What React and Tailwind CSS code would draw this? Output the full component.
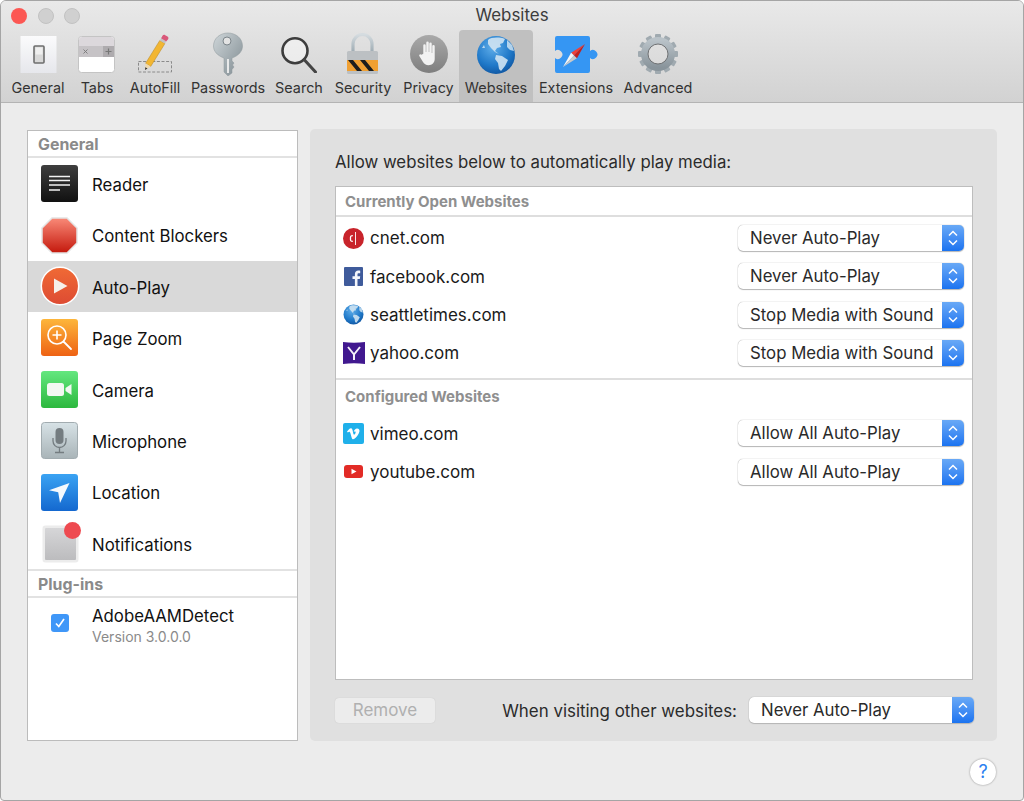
import React from 'react';

const toolbar = [
  { label: 'General', w: 'w-[64px]', icon: <GeneralIcon /> },
  { label: 'Tabs', w: 'w-[54px]', icon: <TabsIcon /> },
  { label: 'AutoFill', w: 'w-[62px]', icon: <PencilIcon /> },
  { label: 'Passwords', w: 'w-[84px]', icon: <KeyIcon /> },
  { label: 'Search', w: 'w-[58px]', icon: <SearchIcon /> },
  { label: 'Security', w: 'w-[70px]', icon: <LockIcon /> },
  { label: 'Privacy', w: 'w-[61px]', icon: <HandIcon /> },
  { label: 'Websites', w: 'w-[74px]', icon: <span className="mt-[2px] block"><GlobeIcon id="big" size={40} /></span>, active: true },
  { label: 'Extensions', w: 'w-[86px]', icon: <ExtensionIcon /> },
  { label: 'Advanced', w: 'w-[78px]', icon: <GearIcon /> },
];

const sidebar = [
  { label: 'Reader', icon: <ReaderIcon /> },
  { label: 'Content Blockers', icon: <StopIcon /> },
  { label: 'Auto-Play', icon: <PlayIcon />, active: true },
  { label: 'Page Zoom', icon: <ZoomIcon /> },
  { label: 'Camera', icon: <CameraIcon /> },
  { label: 'Microphone', icon: <MicIcon /> },
  { label: 'Location', icon: <LocationIcon /> },
  { label: 'Notifications', icon: <NotifIcon /> },
];

const openSites = [
  { name: 'cnet.com', value: 'Never Auto-Play', icon: <CnetIcon /> },
  { name: 'facebook.com', value: 'Never Auto-Play', icon: <FacebookIcon /> },
  { name: 'seattletimes.com', value: 'Stop Media with Sound', icon: <GlobeIcon id="small" size={21} /> },
  { name: 'yahoo.com', value: 'Stop Media with Sound', icon: <YahooIcon /> },
];

const configuredSites = [
  { name: 'vimeo.com', value: 'Allow All Auto-Play', icon: <VimeoIcon /> },
  { name: 'youtube.com', value: 'Allow All Auto-Play', icon: <YoutubeIcon /> },
];

function GeneralIcon() {
  return (
    <svg width="40" height="40" viewBox="0 0 40 40">
      <defs>
        <linearGradient id="genBg" x1="0" y1="0" x2="0" y2="1">
          <stop offset="0" stopColor="#fbfbfc" />
          <stop offset="1" stopColor="#e6e7ec" />
        </linearGradient>
      </defs>
      <rect x="2.500" y="3" width="36" height="37" fill="url(#genBg)" />
      <rect x="16" y="13" width="10" height="17" rx="1" fill="#d8d8d8" stroke="#6e6e6e" strokeWidth="1.600" />
      <rect x="17.500" y="14.500" width="7" height="7" fill="#efefef" />
    </svg>
  );
}

function TabsIcon() {
  return (
    <svg width="40" height="40" viewBox="0 0 40 40">
      <rect x="1.500" y="3.500" width="36" height="36" rx="3" fill="#fff" stroke="#c4c4c4" />
      <path d="M2 7a3 3 0 0 1 3-3h29a3 3 0 0 1 3 3v6H2z" fill="#dcd8dc" />
      <rect x="2" y="13" width="35" height="11" fill="#c6c3c6" />
      <rect x="26" y="13" width="11" height="11" fill="#aeabae" />
      <path d="M6.500 16.500l4 4M10.500 16.500l-4 4" stroke="#777" strokeWidth="0.900" />
      <path d="M31.500 15.500v6M28.500 18.500h6" stroke="#777" strokeWidth="1.200" />
    </svg>
  );
}

function PencilIcon() {
  return (
    <svg width="40" height="40" viewBox="0 0 40 40">
      <rect x="3.500" y="28.500" width="33" height="10.500" fill="none" stroke="#8a8a8a" strokeDasharray="3 1.600" />
      <path d="M10.600 30.300L24.800 7.400l5.100 3.200L15.700 33.500z" fill="#f2b632" stroke="#b5841f" strokeWidth="0.500" />
      <path d="M10 37l.6-6.700 5.100 3.200z" fill="#efd9ae" />
      <path d="M10 37l.3-2.800 2.200 1.300z" fill="#333" />
      <path d="M24.800 7.400l1.300-2.200 5.100 3.200-1.300 2.200z" fill="#c2c2c2" />
      <path d="M26.100 5.200l1.400-2.400c.6-1 1.700-1.200 2.700-.6l2.300 1.400c1 .6 1.200 1.700.6 2.700l-1.900 2.100z" fill="#d9587a" />
    </svg>
  );
}

function KeyIcon() {
  return (
    <svg width="40" height="46" viewBox="0 0 40 46" className="-mt-[3px]">
      <defs>
        <linearGradient id="keyBg" x1="0" y1="0" x2="1" y2="1">
          <stop offset="0" stopColor="#cfd6d9" />
          <stop offset="1" stopColor="#7e8a90" />
        </linearGradient>
      </defs>
      <path d="M20 3c7.500 0 14.500 5 14.500 13 0 5-3.500 9.500-10.500 12v3l2 2-1.500 2 1.500 2-2 2.500V43l-4 3-4-4V28C9 25.500 5.500 21 5.500 16 5.500 8 12.500 3 20 3z" fill="url(#keyBg)" stroke="#8f989c" strokeWidth="0.500" />
      <circle cx="19" cy="11" r="4" fill="#e3e3e3" stroke="#7d868b" strokeWidth="1" />
      <path d="M20 29v14" stroke="#f1f1f1" strokeWidth="1.800" />
    </svg>
  );
}

function SearchIcon() {
  return (
    <svg width="40" height="40" viewBox="0 0 40 40">
      <circle cx="16" cy="17.700" r="12.500" fill="#fafafa" fillOpacity="0.550" stroke="#3d3d3d" strokeWidth="2.600" />
      <path d="M25.500 27l11 12" stroke="#444" strokeWidth="3" strokeLinecap="round" />
    </svg>
  );
}

function LockIcon() {
  return (
    <svg width="40" height="44" viewBox="0 0 40 44" className="-mt-[3px]">
      <defs>
        <linearGradient id="lockArc" x1="0" y1="0" x2="0" y2="1">
          <stop offset="0" stopColor="#d5dce0" />
          <stop offset="1" stopColor="#9aa8b0" />
        </linearGradient>
        <clipPath id="lockBand">
          <rect x="4" y="30" width="31" height="11" />
        </clipPath>
      </defs>
      <path d="M10 23v-9a9.500 9.500 0 0 1 19 0v9" fill="none" stroke="url(#lockArc)" strokeWidth="3.200" />
      <rect x="4" y="21" width="31" height="23" rx="1.500" fill="#bcc0c3" />
      <g clipPath="url(#lockBand)">
        <rect x="4" y="30" width="31" height="11" fill="#f0a033" />
        <path d="M5 30h5l9 11h-5zM17 30h5l9 11h-5z" fill="#1d1d1d" />
      </g>
    </svg>
  );
}

function HandIcon() {
  return (
    <svg width="40" height="40" viewBox="0 0 40 40">
      <defs>
        <linearGradient id="handBg" x1="0" y1="0" x2="0" y2="1">
          <stop offset="0" stopColor="#a9a9a9" />
          <stop offset="1" stopColor="#7e7e7e" />
        </linearGradient>
      </defs>
      <circle cx="20" cy="21" r="19" fill="url(#handBg)" />
      <path transform="translate(2.400 2.300) scale(0.880)" d="M13.500 21V11.500a1.400 1.400 0 0 1 2.800 0V19h.6V8.500a1.400 1.400 0 0 1 2.800 0V19h.6V9.500a1.400 1.400 0 0 1 2.800 0V20h.6v-7.500a1.400 1.400 0 0 1 2.800 0V27c0 4-3 7-7 7-3 0-5-1.500-6.500-4L9 23.500c-.9-1.500 1.400-2.800 2.500-1.300z" fill="#f2f2f2" />
    </svg>
  );
}

function GlobeIcon({ id, size }) {
  return (
    <svg width={size} height={size} viewBox="0 0 40 40" className="shrink-0">
      <defs>
        <radialGradient id={`globe-${id}`} cx="0.42" cy="0.3" r="0.8">
          <stop offset="0" stopColor="#5faeea" />
          <stop offset="0.6" stopColor="#1f78c8" />
          <stop offset="1" stopColor="#0c4d97" />
        </radialGradient>
      </defs>
      <circle cx="20" cy="20" r="19" fill={`url(#globe-${id})`} />
      <path d="M12 5C15 2 24 2 29 4l-2 4-3 1 1 3-4 1-2 3 4 3-4-2-4-4-3-4z" fill="#cfe3f2" fillOpacity="0.9" />
      <path d="M20 20l6 1 6 4-3 6-4 5-2-2-1-6-3-4z" fill="#cfe3f2" fillOpacity="0.9" />
      <path d="M31 5l5 5 2 6-4-1-3-3zM6 13l2-3 1 3z" fill="#d7e8f4" fillOpacity="0.800" />
    </svg>
  );
}

function ExtensionIcon() {
  return (
    <svg width="44" height="40" viewBox="0 0 44 40">
      <path d="M3 3H34A2 2 0 0 1 36 5V18A4.500 4.500 0 1 1 36 25V38A2 2 0 0 1 34 40H3A2 2 0 0 1 1 38V25A4.500 4.500 0 1 0 1 18V5A2 2 0 0 1 3 3Z" fill="#3596f3" />
      <path d="M31 11L17.100 19.700 20 22.500z" fill="#ef4038" />
      <path d="M31 11L22.900 25.300 20 22.500z" fill="#c4201c" />
      <path d="M9 34L17.100 19.700 20 22.500z" fill="#f6f6f6" />
      <path d="M9 34L22.900 25.300 20 22.500z" fill="#c9c9c9" />
    </svg>
  );
}

function GearIcon() {
  const teeth = Array.from({ length: 12 }, (_, i) => i * 30);
  return (
    <svg width="42" height="42" viewBox="0 0 42 42">
      <defs>
        <linearGradient id="gearBg" x1="0" y1="0" x2="0" y2="1">
          <stop offset="0" stopColor="#b9c2c8" />
          <stop offset="1" stopColor="#89949b" />
        </linearGradient>
      </defs>
      <g fill="#a0aab0">
        {teeth.map((a) => (
          <rect key={a} x="18" y="1" width="6" height="7" rx="1" transform={`rotate(${a} 21 21)`} />
        ))}
      </g>
      <circle cx="21" cy="21" r="13.500" fill="none" stroke="url(#gearBg)" strokeWidth="7" />
      <circle cx="21" cy="21" r="10" fill="none" stroke="#707274" strokeWidth="1" />
    </svg>
  );
}

function ReaderIcon() {
  return (
    <svg width="37" height="37" viewBox="0 0 37 37">
      <defs>
        <linearGradient id="rdBg" x1="0" y1="0" x2="0" y2="1">
          <stop offset="0" stopColor="#3e3e3e" />
          <stop offset="1" stopColor="#111" />
        </linearGradient>
      </defs>
      <rect width="37" height="37" rx="3" fill="url(#rdBg)" />
      <path d="M8 11.500h21M8 15.500h21M8 20h21M8 25h11" stroke="#f2f2f2" strokeWidth="1.700" />
    </svg>
  );
}

function StopIcon() {
  return (
    <svg width="37" height="37" viewBox="0 0 37 37">
      <defs>
        <linearGradient id="stBg" x1="0" y1="0" x2="0" y2="1">
          <stop offset="0" stopColor="#f98a78" />
          <stop offset="1" stopColor="#c4180c" />
        </linearGradient>
      </defs>
      <path d="M11 1h15l10 10v15L26 36H11L1 26V11z" fill="url(#stBg)" stroke="#e4e4e4" strokeWidth="1.500" />
    </svg>
  );
}

function PlayIcon() {
  return (
    <svg width="40" height="40" viewBox="0 0 40 40" className="-m-[1.500px] shrink-0">
      <defs>
        <linearGradient id="plBg" x1="0" y1="0" x2="0" y2="1">
          <stop offset="0" stopColor="#f06a35" />
          <stop offset="1" stopColor="#dd4b33" />
        </linearGradient>
      </defs>
      <circle cx="20" cy="20" r="18.700" fill="url(#plBg)" stroke="#fff" strokeWidth="1.500" />
      <path d="M14 12.500L27.500 20 14 27.500z" fill="#f6f0ea" />
    </svg>
  );
}

function ZoomIcon() {
  return (
    <svg width="37" height="37" viewBox="0 0 37 37">
      <defs>
        <linearGradient id="zmBg" x1="0" y1="0" x2="0" y2="1">
          <stop offset="0" stopColor="#fdb63b" />
          <stop offset="1" stopColor="#ee6214" />
        </linearGradient>
      </defs>
      <rect width="37" height="37" rx="3" fill="url(#zmBg)" />
      <circle cx="16" cy="16" r="9" fill="none" stroke="#fff" strokeWidth="1.600" />
      <path d="M16 11.500v9M11.500 16h9" stroke="#fff" strokeWidth="1.600" />
      <path d="M22.500 22.500l7.500 7.500" stroke="#fff" strokeWidth="1.800" strokeLinecap="round" />
    </svg>
  );
}

function CameraIcon() {
  return (
    <svg width="37" height="37" viewBox="0 0 37 37">
      <defs>
        <linearGradient id="cmBg" x1="0" y1="0" x2="0" y2="1">
          <stop offset="0" stopColor="#64e77f" />
          <stop offset="1" stopColor="#2cb83e" />
        </linearGradient>
      </defs>
      <rect width="37" height="37" rx="3" fill="url(#cmBg)" />
      <rect x="6" y="12" width="17" height="13" rx="2.500" fill="#f2f8f2" />
      <path d="M24.500 17l6-4v11l-6-4z" fill="#f2f8f2" />
    </svg>
  );
}

function MicIcon() {
  return (
    <svg width="37" height="37" viewBox="0 0 37 37">
      <defs>
        <linearGradient id="mcBg" x1="0" y1="0" x2="0" y2="1">
          <stop offset="0" stopColor="#d7e2e6" />
          <stop offset="1" stopColor="#a9b4b8" />
        </linearGradient>
      </defs>
      <rect x="0.500" y="0.500" width="36" height="36" rx="3" fill="url(#mcBg)" stroke="#a2acb0" />
      <rect x="14.500" y="6" width="8" height="16" rx="4" fill="#747c80" />
      <path d="M12 16v3a6.500 6.500 0 0 0 13 0v-3M18.500 26v4M14 30.500h9" fill="none" stroke="#747c80" strokeWidth="1.300" />
    </svg>
  );
}

function LocationIcon() {
  return (
    <svg width="37" height="37" viewBox="0 0 37 37">
      <defs>
        <linearGradient id="lcBg" x1="0" y1="0" x2="0" y2="1">
          <stop offset="0" stopColor="#3aa3f3" />
          <stop offset="1" stopColor="#1468cf" />
        </linearGradient>
      </defs>
      <rect width="37" height="37" rx="3" fill="url(#lcBg)" />
      <path d="M28.500 9L19 29l-1.800-10.800L8 16.200z" fill="#f5f9fd" />
    </svg>
  );
}

function NotifIcon() {
  return (
    <span className="relative block h-[37px] w-[37px]">
      <span className="ml-[2px] mt-[1px] block h-[36px] w-[35px] rounded-[3px] border-2 border-[#ececec] bg-linear-to-b from-[#d6d6d8] to-[#bcbcbe] shadow-[0_0_1px_#999]" />
      <span className="absolute -top-[3px] -right-[3px] h-[17px] w-[17px] rounded-full bg-[#ee4a50]" />
    </span>
  );
}

function CnetIcon() {
  return (
    <svg width="21" height="21" viewBox="0 0 21 21" className="shrink-0">
      <circle cx="10.500" cy="10.500" r="10.500" fill="#c8242b" />
      <path d="M9.800 7.800c-1.300-.3-2.300.3-2.300 1.500v2.400c0 1.200 1 1.800 2.300 1.500" fill="none" stroke="#fff" strokeWidth="1.300" />
      <path d="M12.500 4v13" stroke="#fff" strokeWidth="0.900" />
    </svg>
  );
}

function FacebookIcon() {
  return (
    <svg width="21" height="21" viewBox="0 0 21 21" className="shrink-0">
      <rect x="1" y="1" width="19" height="19" rx="1" fill="#3f5b9b" />
      <path d="M14.500 20v-7h2.300l.4-2.800h-2.700V8.500c0-.8.300-1.300 1.400-1.300h1.300V4.700c-.3 0-1-.1-1.900-.1-2 0-3.400 1.200-3.400 3.500v2.100H9.500V13h2.400v7z" fill="#f4f6fb" />
    </svg>
  );
}

function YahooIcon() {
  return (
    <svg width="22" height="22" viewBox="0 0 22 22" className="shrink-0">
      <path d="M0 0c7 1 15 1 22 0v22c-7-1-15-1-22 0z" fill="#41188f" />
      <path d="M5 5l6 7.500V18M17 5l-6 7.500" fill="none" stroke="#f4f0fa" strokeWidth="2" />
    </svg>
  );
}

function VimeoIcon() {
  return (
    <svg width="21" height="21" viewBox="0 0 21 21" className="shrink-0">
      <rect width="21" height="21" rx="2" fill="#1fb0ea" />
      <path d="M4 8.500l.8 1c1.600-1.200 2-1 2.600.8l1.300 4.400c.6 1.700 1.500 2 2.700 1.100 2-1.500 4.300-4.300 5-7 .5-2-.6-3.400-2.400-3.300-1.400.1-2.800 1.400-3.300 3.400 1.700-.8 2.500-.2 1.600 1.500-.9 1.500-1.500 1.700-2 0L9.500 7c-.5-1.800-1.600-2.200-3-1.200z" fill="#fff" />
    </svg>
  );
}

function YoutubeIcon() {
  return (
    <svg width="21" height="21" viewBox="0 0 21 21" className="shrink-0">
      <rect x="1" y="4" width="19" height="13" rx="3" fill="#e22b26" />
      <path d="M8.500 7.800l5 2.700-5 2.700z" fill="#fff" />
    </svg>
  );
}

function PopUp({ value, className = '' }) {
  return (
    <div className={`flex h-[26px] items-stretch overflow-hidden rounded-[5px] bg-white shadow-[0_0_1px_#888,0_1px_1px_#bbb] ${className}`}>
      <span className="flex-1 truncate pl-[12px] text-[16.800px] leading-[26px] text-[#2a2a2a]">{value}</span>
      <span className="flex w-[22px] items-center justify-center bg-linear-to-b from-[#69a9f6] to-[#1a73f0]">
        <svg width="12" height="20" viewBox="0 0 12 20" fill="none" stroke="#fff" strokeWidth="1.500">
          <path d="M2 7.500L6 3.500l4 4M2 12.500l4 4 4-4" />
        </svg>
      </span>
    </div>
  );
}

function SiteRow({ site }) {
  return (
    <div className="flex h-[38.300px] items-center pl-[7px] pr-[8px]">
      <span className="flex w-[21px] justify-center">{site.icon}</span>
      <span className="ml-[6px] flex-1 pt-[2px] text-[17px] text-[#1a1a1a]">{site.name}</span>
      <PopUp value={site.value} className="w-[226px]" />
    </div>
  );
}

export default function App() {
  return (
    <div className="flex h-[801px] w-[1024px] flex-col overflow-hidden rounded-t-[6px] rounded-b-[4px] border border-[#a5a5a5] bg-[#ececec] font-['Inter','Liberation_Sans',sans-serif] text-[#222]">
      {/* title + toolbar */}
      <div className="h-[102px] shrink-0 border-b border-[#b4b4b4] bg-linear-to-b from-[#e9e9e9] to-[#d2d2d2]">
        <div className="grid h-[29px] grid-cols-[1fr_auto_1fr] items-center">
          <div className="flex gap-[10.500px] pl-[10px]">
            <span className="h-[16px] w-[16px] rounded-full bg-[#fc5753]" />
            <span className="h-[16px] w-[16px] rounded-full border border-[#c2c2c2] bg-[#d0d0d0]" />
            <span className="h-[16px] w-[16px] rounded-full border border-[#c2c2c2] bg-[#d0d0d0]" />
          </div>
          <span className="text-[16.900px] text-[#3c3c3c]">Websites</span>
          <span />
        </div>
        <div className="flex pl-[5px]">
          {toolbar.map((item) => (
            <div key={item.label} className={`flex h-[72px] flex-col items-center rounded-t-[4px] pt-[3px] ${item.w} ${item.active ? 'bg-[#c0c0c0]' : ''}`}>
              <div className="flex h-[40px] items-start justify-center">{item.icon}</div>
              <span className="mt-[5px] whitespace-nowrap text-[14.400px] leading-[20px] text-[#333]">{item.label}</span>
            </div>
          ))}
        </div>
      </div>

      {/* body */}
      <div className="flex flex-1 gap-[12px] pl-[26px] pr-[26px] pt-[27px]">
        <aside className="flex h-[611px] w-[271px] shrink-0 flex-col border border-[#bcbcbc] bg-white">
          <div className="h-[27px] border-b-2 border-[#e2e2e2] pl-[10px] text-[15.900px] font-bold leading-[28px] text-[#8a8a8a]">General</div>
          {sidebar.map((item) => (
            <div key={item.label} className={`flex h-[51.400px] items-center gap-[14px] pl-[13px] ${item.active ? 'bg-[#d9d9d9]' : ''}`}>
              <span className="flex h-[37px] w-[37px] items-center justify-center">{item.icon}</span>
              <span className="pt-[4px] text-[16.800px] text-[#111]">{item.label}</span>
            </div>
          ))}
          <div className="h-[29px] border-y-2 border-[#e2e2e2] pl-[10px] text-[15.900px] font-bold leading-[28px] text-[#8a8a8a]">Plug-ins</div>
          <div className="flex items-start pl-[23px] pt-[7px]">
            <span className="mt-[9px] flex h-[18px] w-[18px] items-center justify-center rounded-[3px] bg-[#3f97f8]">
              <svg width="12" height="12" viewBox="0 0 12 12" fill="none" stroke="#fff" strokeWidth="1.700">
                <path d="M2 6.500l2.800 3L10 2" />
              </svg>
            </span>
            <div className="ml-[23px]">
              <div className="text-[16.800px] leading-[22px] text-[#111]">AdobeAAMDetect</div>
              <div className="text-[14px] leading-[20px] text-[#8a8a8a]">Version 3.0.0.0</div>
            </div>
          </div>
        </aside>

        <main className="-mt-px flex h-[612px] w-[687px] flex-col rounded-[5px] bg-[#e0e0e0] pl-[25px] pr-[23px] pt-[22px]">
          <p className="h-[22px] text-[16.800px] leading-[22px] text-[#2b2b2b]">Allow websites below to automatically play media:</p>
          <div className="mt-[13px] h-[494px] w-[638px] border border-[#bdbdbd] bg-white">
            <div className="h-[30px] border-b-2 border-[#dedede] pl-[9px] text-[15px] font-bold leading-[29px] text-[#8f8f8f]">Currently Open Websites</div>
            <div className="pt-[2px]">
              {openSites.map((s) => <SiteRow key={s.name} site={s} />)}
            </div>
            <div className="mt-[6px] h-[36px] border-t-2 border-[#dedede] pl-[9px] text-[15px] font-bold leading-[34px] text-[#8f8f8f]">Configured Websites</div>
            {configuredSites.map((s) => <SiteRow key={s.name} site={s} />)}
          </div>
          <div className="mt-[16px] flex items-center">
            <button className="h-[25px] w-[100px] rounded-[4px] bg-[#ececec] text-[17px] leading-[25px] text-[#b0b0b0] shadow-[0_0_1px_#bbb]">Remove</button>
            <span className="ml-auto pt-[3px] text-[16.900px] text-[#2b2b2b]">When visiting other websites:</span>
            <PopUp value="Never Auto-Play" className="ml-[12px] w-[225px]" />
          </div>
        </main>
      </div>

      <div className="flex justify-end pb-[15px] pr-[27px]">
        <button className="h-[26px] w-[26px] rounded-full bg-white text-[18px] leading-[26px] text-[#2a7ff0] shadow-[0_0_2px_#888]">?</button>
      </div>
    </div>
  );
}
